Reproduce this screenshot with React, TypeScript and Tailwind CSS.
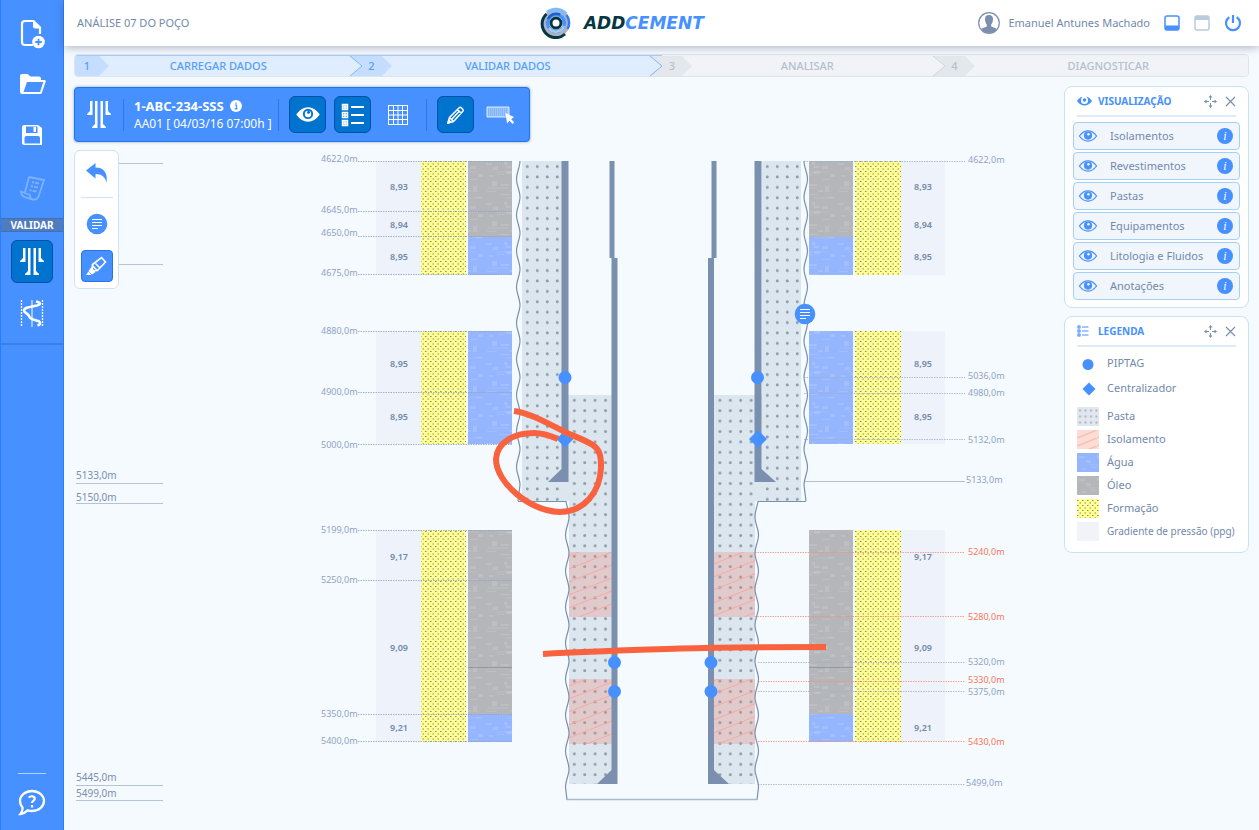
import React, { useState } from "react"
import clsx from "clsx"

type Depth = { y: number; label: string; labelY?: number; x?: number; from?: number; tone?: "red"; solid?: boolean }

const steps = [
  { id: 1, label: "CARREGAR DADOS", done: true, pad: "" },
  { id: 2, label: "VALIDAR DADOS", done: true, pad: "pr-2" },
  { id: 3, label: "ANALISAR", done: false, pad: "pl-2" },
  { id: 4, label: "DIAGNOSTICAR", done: false, pad: "pl-6" },
]

const layers = ["Isolamentos", "Revestimentos", "Pastas", "Equipamentos", "Litologia e Fluidos", "Anotações"]

const fills = [
  { label: "Pasta", fill: "url(#pasta-legend)" },
  { label: "Isolamento", fill: "url(#isolamento-legend)" },
  { label: "Água", fill: "url(#agua)" },
  { label: "Óleo", fill: "url(#oleo)" },
  { label: "Formação", fill: "url(#formacao)" },
  { label: "Gradiente de pressão (ppg)", fill: "#f1f3f9" },
]

const ruler = [
  { label: "4622,0m", textY: 157, lineY: 163 },
  { label: "", textY: 0, lineY: 264 },
  { label: "5133,0m", textY: 479, lineY: 483 },
  { label: "5150,0m", textY: 501, lineY: 503 },
  { label: "5445,0m", textY: 781, lineY: 785 },
  { label: "5499,0m", textY: 797, lineY: 800 },
]

const zones = [
  { top: 161, bottom: 275, oil: [161, 237], water: [237, 275] },
  { top: 331, bottom: 444, oil: null, water: [331, 444] },
  { top: 530, bottom: 742, oil: [530, 714], water: [714, 742] },
]

const gradients = [
  { y: 187, v: "8,93" },
  { y: 225, v: "8,94" },
  { y: 257, v: "8,95" },
  { y: 364, v: "8,95" },
  { y: 417, v: "8,95" },
  { y: 557, v: "9,17" },
  { y: 648, v: "9,09" },
  { y: 728, v: "9,21" },
]

const leftDepths: Depth[] = [
  { y: 161, label: "4622,0m", labelY: 159 },
  { y: 211, label: "4645,0m", labelY: 210 },
  { y: 236, label: "4650,0m", labelY: 233 },
  { y: 274, label: "4675,0m", labelY: 273 },
  { y: 331, label: "4880,0m" },
  { y: 392, label: "4900,0m" },
  { y: 444, label: "5000,0m", labelY: 445 },
  { y: 530, label: "5199,0m" },
  { y: 580, label: "5250,0m" },
  { y: 714, label: "5350,0m" },
  { y: 741, label: "5400,0m" },
]

const rightDepths: Depth[] = [
  { y: 161, label: "4622,0m", labelY: 160, from: 804 },
  { y: 377, label: "5036,0m", labelY: 376, from: 804 },
  { y: 393, label: "4980,0m", from: 804 },
  { y: 439, label: "5132,0m", labelY: 440, from: 804 },
  { y: 481, label: "5133,0m", labelY: 480, from: 804, x: 966, solid: true },
  { y: 552, label: "5240,0m", from: 755, tone: "red" },
  { y: 616, label: "5280,0m", labelY: 617, from: 755, tone: "red" },
  { y: 662, label: "5320,0m", from: 758 },
  { y: 681, label: "5330,0m", labelY: 680, from: 758, tone: "red" },
  { y: 691, label: "5375,0m", labelY: 692, from: 758 },
  { y: 741, label: "5430,0m", labelY: 742, from: 758, tone: "red" },
  { y: 784, label: "5499,0m", labelY: 783, from: 758, x: 966 },
]

// wavy borehole wall, one bulge every 36 units
function wave(x: number, amp: number, top: number, bottom: number) {
  let d = `M${x} ${top}`
  let y = top
  let bulged = false
  while (y + 18 < bottom) {
    const from = bulged ? x - amp : x
    const to = bulged ? x : x - amp
    d += ` C${from} ${y + 6} ${to} ${y + 12} ${to} ${y + 18}`
    y += 18
    bulged = !bulged
  }
  return `${d} L${x - 2} ${bottom}`
}

function EyeIcon({ className, filled }: { className?: string; filled?: boolean }) {
  return (
    <svg className={className} viewBox="0 0 22 14" fill="none">
      <path
        d="M1 7C4 2.8 7.300 1 11 1s7 1.800 10 6c-3 4.200-6.300 6-10 6S4 11.200 1 7Z"
        fill={filled ? "currentColor" : "none"}
        stroke="currentColor"
        strokeWidth="1.500"
      />
      <circle cx="11" cy="6.500" r="4.800" fill={filled ? "#0073cf" : "currentColor"} />
      {filled && <circle cx="11" cy="6.500" r="3" fill="currentColor" />}
      <circle cx="11.500" cy="5" r="1.400" fill={filled ? "#0073cf" : "#fff"} />
    </svg>
  )
}

function SmallEyeIcon() {
  return (
    <svg width="15" height="10" viewBox="0 0 15 10" fill="#4690ff">
      <path d="M0 5C2.200 2 4 1 5.500.800A4 4 0 0 0 4 4.500a3.500 3.500 0 0 0 7 0A4 4 0 0 0 9.500.8C11 1 12.800 2 15 5c-2.500 3.400-5 4.500-7.500 4.500S2.500 8.400 0 5Z" />
      <circle cx="7.500" cy="4" r="1.800" />
    </svg>
  )
}

function WellIcon() {
  return (
    <svg width="24" height="28" viewBox="0 0 24 28" fill="currentColor">
      <path d="M3 0h2.500v14H0v-1l3-3ZM8 0h2.500v27H5v-1l3-3ZM13.500 0H16v23l3 3v1h-5.500ZM18.500 0H21v10l3 3v1h-5.500Z" />
    </svg>
  )
}

function LegendIcon({ size }: { size: "sm" | "lg" }) {
  return (
    <svg className={size === "lg" ? "h-6 w-6" : "h-3 w-3"} viewBox="0 0 24 24" fill="none" stroke="currentColor" strokeWidth="1.500">
      <path d="M1.500 1.500h5v5h-5zM1.500 9.500h5v5h-5zM1.500 17.500h5v5h-5z" />
      <path d="M3 3h2v2H3zM4 10v4M2 12h4M3 19h2v2H3z" />
      <path d="M10 4h13M10 12h13M10 20h13" strokeWidth="2" />
    </svg>
  )
}

function CommentBadge({ cx, cy }: { cx: number; cy: number }) {
  return (
    <g>
      <circle cx={cx} cy={cy} r="10.300" fill="#4690ff" />
      <path
        d={`M${cx - 5} ${cy - 4.5}h10M${cx - 5} ${cy - 1.5}h10M${cx - 5} ${cy + 1.5}h10M${cx - 5} ${cy + 4.5}h6`}
        stroke="#fff"
        strokeWidth="1.200"
      />
    </g>
  )
}

function Sidebar() {
  return (
    <aside className="flex w-16 shrink-0 flex-col items-center border-x border-[#2a7bff] bg-[#4690ff] text-white">
      <nav className="flex w-full flex-col items-center" aria-label="Projeto">
        <button type="button" aria-label="Novo" className="mt-4 flex h-9 w-9 items-center justify-center">
          <svg width="26" height="30" viewBox="0 0 26 30" fill="none">
            <path d="M14 26H6a3 3 0 0 1-3-3V5a3 3 0 0 1 3-3h8.500l6.500 6.500V15" stroke="#fff" strokeWidth="2.200" />
            <path d="M14 1l8 8.500h-6a2 2 0 0 1-2-2Z" fill="#fff" />
            <circle cx="19.500" cy="23" r="6.300" fill="#fff" />
            <path d="M19.500 19.800v6.400M16.300 23h6.400" stroke="#4690ff" strokeWidth="1.800" />
          </svg>
        </button>
        <button type="button" aria-label="Abrir" className="mt-3.5 flex h-9 w-9 items-center justify-center">
          <svg width="27" height="22" viewBox="0 0 27 22">
            <path
              fillRule="evenodd"
              d="M3 1h5.500l3 2.500H20a2 2 0 0 1 2 2V7h3.500c1 0 1.500.800 1.200 1.700L23 19.500c-.300 1-1 1.500-2 1.500H3a2.200 2.200 0 0 1-2-2V3a2 2 0 0 1 2-2Zm5 8L4.500 19H21l3.300-10Z"
              fill="#fff"
            />
          </svg>
        </button>
        <button type="button" aria-label="Salvar" className="mt-[15px] flex h-9 w-9 items-center justify-center">
          <svg width="22" height="22" viewBox="0 0 22 22">
            <path
              fillRule="evenodd"
              d="M3 1h14l4 3v17H3.500A2.500 2.500 0 0 1 1 18.500V3a2 2 0 0 1 2-2Zm2 1.500V9h11.500V2.500ZM5.500 12a2 2 0 0 0-2 2v5.500h15.500V14a2 2 0 0 0-2-2Z"
              fill="#fff"
            />
            <path d="M12.500 3h2.500v5h-2.500z" fill="#fff" />
          </svg>
        </button>
        <button type="button" aria-label="Relatório" disabled className="mt-[17px] flex h-9 w-9 items-center justify-center opacity-30">
          <svg width="27" height="27" viewBox="0 0 27 27" fill="none" stroke="#fff" strokeWidth="1.800">
            <path d="M10 2l15 3-5 15c-1 4-4 5-6.500 4.500C11 24 11 21 11 20L2 16.500c0 4 2 5 4 5.700l7 2.300" />
            <path d="M10 2L6 17.500" />
            <path d="M13 7l7 1.500M12 11l7 1.500M10.500 15l7 1.500" strokeDasharray="2 1.200 6 0" strokeWidth="2" />
          </svg>
        </button>
        <h2 className="mt-3 flex h-3.5 w-full items-center justify-center border-y border-[#456fae] bg-[#4f7cbf] text-[10px] font-bold leading-none">
          VALIDAR
        </h2>
        <button
          type="button"
          aria-label="Poço"
          className="mt-2 flex h-[43px] w-[42px] items-center justify-center rounded-md border border-[#0450a8] bg-[#0073cf]"
        >
          <WellIcon />
        </button>
        <button type="button" aria-label="Perfil" className="mt-3 flex h-9 w-9 items-center justify-center">
          <svg width="24" height="27" viewBox="0 0 24 27" fill="none" stroke="#fff">
            <path d="M1.500 0v27M22.500 0v27" strokeWidth="1.300" strokeDasharray="2 1" />
            <path d="M12 0v27" />
            <path d="M16 1.500c5 1 5 3 1 4C10 7 4 7.500 4 10.500c0 2.500 4 2.500 5 5.500 1 3.500 4 3.500 7.500 4.500 4.500 1 4.500 4 1 5" strokeWidth="2.600" />
          </svg>
        </button>
        <span className="mt-3 h-0.5 w-full bg-[#3b80e6]" />
      </nav>
      <span className="mb-3 mt-auto h-px w-7 bg-white/60" />
      <button type="button" aria-label="Ajuda" className="mb-3 flex h-8 w-8 items-center justify-center">
        <svg width="28" height="27" viewBox="0 0 28 27" fill="none">
          <path
            d="M14 2c6.600 0 12 4.400 12 10s-5.400 10-12 10c-1.500 0-3-.200-4.300-.6C7.500 23.500 5 24.800 2.500 25c1.500-1.800 2.300-4 2-6.500C2.800 16.700 2 14.400 2 12 2 6.400 7.400 2 14 2Z"
            stroke="#fff"
            strokeWidth="2.300"
          />
          <path d="M10.800 8.600c1.500-2 6.200-1.800 5.900 1.200-.200 2-2.700 2-2.700 4.300M14 16v2.400" stroke="#fff" strokeWidth="2.200" />
        </svg>
      </button>
    </aside>
  )
}

function Logo() {
  return (
    <div className="flex items-center gap-3">
      <svg width="32" height="32" viewBox="0 0 32 32" fill="none" className="shrink-0">
        <circle cx="16" cy="16" r="12" stroke="#aeb4bf" strokeWidth="4" />
        <path d="M6.500 7A13.500 13.500 0 0 0 25 27" stroke="#053642" strokeWidth="3" />
        <path d="M7 5.500A13.800 13.800 0 0 1 26 7" stroke="#7dbcff" strokeWidth="3.500" />
        <path d="M26.500 8A13.500 13.500 0 0 1 27.500 22" stroke="#2e7ff0" strokeWidth="2.500" />
        <circle cx="16" cy="16" r="8.500" stroke="#4690ff" strokeWidth="3.500" />
        <path d="M8 12a9 9 0 0 1 12-4.500" stroke="#1c5fd0" strokeWidth="2.500" />
        <path d="M9 21a8.500 8.500 0 0 0 15-2" stroke="#a9c8ee" strokeWidth="2.500" />
        <circle cx="16" cy="16" r="5" stroke="#053642" strokeWidth="3" fill="#fff" />
      </svg>
      <span className="font-['DejaVu_Sans',sans-serif] text-[17px] font-bold italic leading-none text-[#4690ff]">
        <span className="text-[#053642]">ADD</span>CEMENT
      </span>
    </div>
  )
}

function Header() {
  return (
    <header className="z-20 grid h-[46px] shrink-0 grid-cols-[474fr_auto_553fr] items-center bg-white shadow-[0_2px_8px_rgba(60,70,100,0.35)]">
      <h1 className="pl-[13px] text-[11px]">ANÁLISE 07 DO POÇO</h1>
      <Logo />
      <div className="flex items-center justify-end gap-3.5 pr-[17px]">
        <div className="flex items-center gap-2 text-[11px]">
          <svg width="22" height="22" viewBox="0 0 22 22">
            <circle cx="11" cy="11" r="10.300" fill="#fff" stroke="#7a8fae" strokeWidth="1.200" />
            <path
              d="M11 3c3 0 4.200 1.800 4 4.500-.200 2.300-.800 4-1.800 5v2c1.500.800 3.800 1 5.300 2.500A9.500 9.500 0 0 1 11 21a9.500 9.500 0 0 1-7.500-4C5 15.500 7.300 15.300 8.800 14.500v-2c-1-1-1.600-2.700-1.800-5C6.800 4.800 8 3 11 3Z"
              fill="#7a8fae"
            />
          </svg>
          Emanuel Antunes Machado
        </div>
        <button type="button" aria-label="Minimizar">
          <svg width="16" height="16" viewBox="0 0 16 16">
            <rect x="1" y="1" width="14" height="14" rx="2" fill="none" stroke="#4690ff" strokeWidth="1.500" />
            <path d="M1 10.500h14v3a1.500 1.500 0 0 1-1.500 1.500h-11A1.500 1.500 0 0 1 1 13.500Z" fill="#4690ff" />
          </svg>
        </button>
        <button type="button" aria-label="Janela">
          <svg width="16" height="16" viewBox="0 0 16 16">
            <rect x="1" y="1" width="14" height="14" rx="2" fill="none" stroke="#b9cbdd" strokeWidth="1.500" />
            <path d="M1 5V2.500A1.500 1.500 0 0 1 2.500 1h11A1.500 1.500 0 0 1 15 2.500V5Z" fill="#b9cbdd" />
          </svg>
        </button>
        <button type="button" aria-label="Sair">
          <svg width="18" height="18" viewBox="0 0 18 18" fill="none" stroke="#4690ff" strokeWidth="2.200">
            <path d="M9 1v8M5.300 3.200a7 7 0 1 0 7.400 0" />
          </svg>
        </button>
      </div>
    </header>
  )
}

function Steps() {
  return (
    <ol className="grid h-[23px] grid-cols-[287fr_301fr_283fr_304fr] overflow-hidden rounded border border-[#dfe3ea] text-[11px] font-medium">
      {steps.map((step, i) => {
        const last = i === steps.length - 1
        const nextDone = !last && steps[i + 1].done
        return (
          <li
            key={step.id}
            className={clsx("grid border-y", step.done ? "border-[#a4cffc] bg-[#e0edff] text-[#55a0f6]" : "border-transparent bg-[#f1f3f7] text-[#b4c0d0]")}
          >
            <span className={clsx("flex items-center justify-center [grid-area:1/1]", step.pad)}>{step.label}</span>
            <span className="flex items-stretch justify-between [grid-area:1/1]">
              <span className="flex">
                <span className={clsx("flex items-center justify-center", i === 0 ? "w-6" : "w-5", step.done ? "bg-[#c5deff]" : "bg-[#e4e8ed]")}>
                  {step.id}
                </span>
                <svg className="h-full w-2.5" viewBox="0 0 10 20" preserveAspectRatio="none" fill={step.done ? "#c5deff" : "#e4e8ed"}>
                  <path d="M0 0L10 10L0 20Z" />
                </svg>
              </span>
              {!last && (
                <svg className="h-full w-3" viewBox="0 0 12 20" preserveAspectRatio="none">
                  <path d="M0 0H12V20H0Z" fill={nextDone ? "#c5deff" : "#e4e8ed"} />
                  <path d="M0 0L12 10L0 20" fill={step.done ? "#e0edff" : "#f1f3f7"} stroke={step.done ? "#7cb7f8" : "#cfd6df"} />
                </svg>
              )}
            </span>
          </li>
        )
      })}
    </ol>
  )
}

function Toolbar() {
  const active = "flex h-[37px] w-[37px] items-center justify-center rounded-md border border-[#0450a8] bg-[#0073cf]"
  return (
    <div className="flex h-[55px] w-[456px] items-center rounded border border-[#1c74f7] bg-[#4690ff] text-white shadow-[0_0_3px_rgba(90,100,120,0.6)]">
      <span className="ml-3">
        <WellIcon />
      </span>
      <span className="ml-3 h-8 w-px bg-[#2a78f0]" />
      <div className="ml-2.5 w-36 text-[12px] leading-[17px]">
        <div className="flex items-center gap-1.5 text-[13px] font-bold leading-[17px]">
          1-ABC-234-SSS
          <svg width="12" height="12" viewBox="0 0 12 12">
            <circle cx="6" cy="6" r="6" fill="#fff" />
            <path d="M4.800 5h1.700v3.500M4.600 8.800h3M6 2.400v1.300" stroke="#4690ff" strokeWidth="1.200" fill="none" />
          </svg>
        </div>
        <div className="whitespace-nowrap">AA01 [ 04/03/16 07:00h ]</div>
      </div>
      <span className="h-8 w-px bg-[#2a78f0]" />
      <button type="button" aria-label="Visualização" className={clsx(active, "ml-2.5")}>
        <EyeIcon className="h-[15px] w-6" filled />
      </button>
      <button type="button" aria-label="Legenda" className={clsx(active, "ml-2")}>
        <LegendIcon size="lg" />
      </button>
      <button type="button" aria-label="Grade" className="ml-2 flex h-[37px] w-[37px] items-center justify-center">
        <svg width="20" height="20" viewBox="0 0 20 20" fill="none" stroke="#fff">
          <path d="M0 .5h20M0 5.500h20M0 10h20M0 14.500h20M0 19.500h20M.5 0v20M5.500 0v20M10 0v20M14.500 0v20M19.500 0v20" />
        </svg>
      </button>
      <span className="ml-2.5 h-8 w-px bg-[#2a78f0]" />
      <button type="button" aria-label="Editar" className={clsx(active, "ml-2.5")}>
        <svg width="18" height="18" viewBox="0 0 18 18" fill="none" stroke="#fff" strokeWidth="1.500">
          <path d="M1 17l1.500-5.500L12.500 1.500c1-1 4.500 2.500 3.500 3.500L6.500 15.500ZM10.500 3.500l4 4M2.500 11.500l4 4M12 5.500l-7 7.500" />
          <path d="M1 17l.8-2.800 2 2Z" fill="#fff" />
        </svg>
      </button>
      <button type="button" aria-label="Selecionar" className="ml-3 flex h-[37px] w-[30px] items-center justify-center">
        <svg width="30" height="20" viewBox="0 0 30 20">
          <path d="M1 2h22v10H1z" fill="#9cc4fd" stroke="#dceaff" />
          <path d="M2 4h20M2 6h20M2 8h20M2 10h20" stroke="#6ba6fb" strokeDasharray="1 1" />
          <path d="M19.500 8l1.500 10.500 2.500-2.700 3 3.200 1.700-1.700-3-3L28 12Z" fill="#fff" />
        </svg>
      </button>
    </div>
  )
}

function AnnotationTools() {
  return (
    <div className="flex h-[139px] w-[45px] flex-col items-center rounded-md border border-[#cde3ef] bg-white">
      <button type="button" aria-label="Desfazer" className="mt-2.5 flex h-6 w-8 items-center justify-center">
        <svg width="22" height="20" viewBox="0 0 22 20" fill="#4690ff">
          <path d="M0 7.500L9.500 0v4.500C17 4.500 22 9 20.500 19.500 19 14 16 11 9.500 11v4.500Z" />
        </svg>
      </button>
      <span className="mt-3 h-px w-8 bg-[#cfe3f8]" />
      <button type="button" aria-label="Comentar" className="mt-3.5 flex h-6 w-6 items-center justify-center">
        <svg width="22" height="22" viewBox="0 0 22 22">
          <CommentBadge cx={11} cy={11} />
        </svg>
      </button>
      <button type="button" aria-label="Marcador" className="mt-3.5 flex h-8 w-8 items-center justify-center rounded border border-[#2474ee] bg-[#4690ff]">
        <svg width="21" height="20" viewBox="0 0 21 20" fill="none" stroke="#fff" strokeWidth="1.600">
          <path d="M15.500 1.500l4 4.500-8 8.500-4 .5L6 12.500l.5-4ZM6 9l5 5.500M9.500 7.500l4 4" />
          <path d="M5 11.500L2.500 15l3.500 3.500L9.500 16ZM2.500 15.500L0 19h5.500Z" fill="#fff" stroke="none" />
        </svg>
      </button>
    </div>
  )
}

function Panel({ title, icon, children }: { title: string; icon: React.ReactNode; children: React.ReactNode }) {
  return (
    <section className="rounded-lg border border-[#c9e3f0] bg-white px-2 pb-[7px]">
      <div className="mx-1 flex h-[30px] items-center border-b-2 border-[#dcebf7] text-[#7a8fae]">
        <span className="flex w-[21px] text-[#4690ff]">{icon}</span>
        <h2 className="flex-1 text-[10px] font-bold text-[#4690ff]">{title}</h2>
        <button type="button" aria-label={`Mover ${title}`}>
          <svg width="13" height="13" viewBox="0 0 13 13" fill="#7a8fae">
            <path d="M6.500 0l2 2.500h-4ZM6.500 13l2-2.500h-4ZM0 6.500l2.500-2v4ZM13 6.500l-2.500-2v4ZM6 2.500h1V5H6ZM6 8h1v2.500H6ZM2.500 6H5v1H2.500ZM8 6h2.500v1H8Z" />
          </svg>
        </button>
        <button type="button" aria-label={`Fechar ${title}`} className="ml-2">
          <svg width="11" height="11" viewBox="0 0 11 11" stroke="#7a8fae" strokeWidth="1.200">
            <path d="M1 1l9 9M10 1l-9 9" />
          </svg>
        </button>
      </div>
      {children}
    </section>
  )
}

function VisualizationPanel() {
  const [hidden, setHidden] = useState<string[]>([])
  const toggle = (layer: string) =>
    setHidden(hidden.includes(layer) ? hidden.filter((l) => l !== layer) : [...hidden, layer])

  return (
    <Panel title="VISUALIZAÇÃO" icon={<SmallEyeIcon />}>
      <ul className="mt-[5px] flex flex-col gap-0.5">
        {layers.map((layer) => (
          <li key={layer} className="flex h-7 items-center rounded-sm border border-[#a3d0f8] bg-[#f1f6fd] pr-1.5">
            <button
              type="button"
              aria-pressed={!hidden.includes(layer)}
              onClick={() => toggle(layer)}
              className="flex flex-1 items-center gap-3 whitespace-nowrap pl-1 text-left text-[11px]"
            >
              <EyeIcon className={clsx("h-3 w-5 text-[#4690ff]", hidden.includes(layer) && "opacity-30")} />
              {layer}
            </button>
            <button
              type="button"
              aria-label={`Sobre ${layer}`}
              className="flex h-4 w-4 items-center justify-center rounded-full bg-[#4690ff] font-['Liberation_Serif',serif] text-[12px] italic leading-none text-white"
            >
              i
            </button>
          </li>
        ))}
      </ul>
    </Panel>
  )
}

function LegendPanel() {
  return (
    <Panel title="LEGENDA" icon={<LegendIcon size="sm" />}>
      <ul className="mx-1 mt-1 pb-0.5 text-[11px]">
        <li className="flex h-[25px] items-center gap-2">
          <svg width="22" height="12" viewBox="0 0 22 12">
            <circle cx="11" cy="6.500" r="5.500" fill="#4690ff" />
          </svg>
          PIPTAG
        </li>
        <li className="mb-1 flex h-[25px] items-center gap-2">
          <svg width="22" height="14" viewBox="0 0 22 14">
            <path d="M12 .5L18.500 7 12 13.500 5.500 7Z" fill="#4690ff" />
          </svg>
          Centralizador
        </li>
        {fills.map((item, i) => (
          <li key={item.label} className={clsx("flex h-[23px] items-center gap-2 whitespace-nowrap", i === fills.length - 1 && "text-[10px]")}>
            <svg width="22" height="19" viewBox="0 0 22 19" className="shrink-0">
              <rect width="22" height="19" fill={item.fill} />
            </svg>
            {item.label}
          </li>
        ))}
      </ul>
    </Panel>
  )
}

function DepthRuler() {
  return (
    <svg width="90" height="660" viewBox="74 150 90 660" className="mt-16 justify-self-start [grid-area:1/1]" fontSize="10" fill="#7a8fae">
      {ruler.map((mark) => (
        <g key={mark.lineY}>
          {mark.label && (
            <text x="76" y={mark.textY}>
              {mark.label}
            </text>
          )}
          <path d={`M76 ${mark.lineY + 0.5}H163`} stroke="#b3c4d8" />
        </g>
      ))}
    </svg>
  )
}

function Patterns() {
  return (
    <defs>
      <pattern id="pasta-outer" x="522" y="161" width="10" height="10.400" patternUnits="userSpaceOnUse">
        <circle cx="5.300" cy="5.500" r="1.500" fill="#8f9ca8" />
      </pattern>
      <pattern id="pasta-inner" x="569" y="395" width="10.400" height="10.400" patternUnits="userSpaceOnUse">
        <circle cx="5.300" cy="5.300" r="1.500" fill="#8f9ca8" />
      </pattern>
      <pattern id="pasta-legend" width="5.500" height="6" patternUnits="userSpaceOnUse">
        <path d="M0 0h5.500v6H0z" fill="#e2e6ee" />
        <path d="M2 2.500h2v2H2z" fill="#a9b4c4" />
      </pattern>
      <pattern id="isolamento" width="33" height="13" patternUnits="userSpaceOnUse">
        <path d="M0 13L33 0" stroke="#f4a9a3" />
      </pattern>
      <pattern id="isolamento-legend" width="20" height="8" patternUnits="userSpaceOnUse">
        <path d="M0 0h20v8H0z" fill="#fddcd6" />
        <path d="M0 8L20 0" stroke="#fabdb2" strokeWidth="1.400" />
      </pattern>
      <pattern id="smudges" width="44" height="40" patternUnits="userSpaceOnUse">
        <path
          d="M2 3h6v2H2zM9 7h5v3H9zM20 2h3v4h4v2h-5v-3h-2zM30 6h6v3h-6zM24 11h4v3h-6v-2zM5 15h4v2H5zM14 14h6v1h-6zM8 21h5v5H8zM30 19h8v1h-8zM17 24h8v2h-8zM33 26h4v6h-4zM3 31h9v1H3zM16 34h10v1H16zM26 30h5v2h-5zM38 14h5v3h-5zM36 37h7v1h-7z"
          fill="#fff"
          fillOpacity="0.130"
        />
        <path d="M12 12h26M4 28h20M22 38h20" stroke="#fff" strokeOpacity="0.100" />
      </pattern>
      <pattern id="agua" width="44" height="40" patternUnits="userSpaceOnUse">
        <path d="M0 0h44v40H0z" fill="#95b6ff" />
        <path d="M0 0h44v40H0z" fill="url(#smudges)" />
      </pattern>
      <pattern id="oleo" width="44" height="40" patternUnits="userSpaceOnUse">
        <path d="M0 0h44v40H0z" fill="#b4b6b9" />
        <path d="M0 0h44v40H0z" fill="url(#smudges)" />
      </pattern>
      <pattern id="formacao" width="5" height="5" patternUnits="userSpaceOnUse">
        <path d="M0 0h5v5H0z" fill="#ffff94" />
        <path d="M0 1h1.500v1H0zM2.500 3.500H4v1H2.500z" fill="#8c8c63" />
      </pattern>
    </defs>
  )
}

function ZoneColumns() {
  return (
    <g>
      {zones.map((z) => (
        <g key={z.top}>
          <path d={`M376 ${z.top}H421V${z.bottom}H376ZM901 ${z.top}H945V${z.bottom}H901Z`} fill="#eef2fa" />
          <path d={`M421 ${z.top}H466V${z.bottom}H421ZM855 ${z.top}H901V${z.bottom}H855Z`} fill="url(#formacao)" />
          {z.oil && <path d={`M468 ${z.oil[0]}H512V${z.oil[1]}H468ZM809 ${z.oil[0]}H853V${z.oil[1]}H809Z`} fill="url(#oleo)" />}
          <path d={`M468 ${z.water[0]}H512V${z.water[1]}H468ZM809 ${z.water[0]}H853V${z.water[1]}H809Z`} fill="url(#agua)" />
        </g>
      ))}
      <path d="M468 667.500H512M809 667.500H853" stroke="#95979a" />
      {gradients.map((g) => (
        <g key={g.y} textAnchor="middle" fontWeight="600" fill="#7289a9">
          <text x="399" y={g.y + 3}>{g.v}</text>
          <text x="923" y={g.y + 3}>{g.v}</text>
        </g>
      ))}
    </g>
  )
}

function Completion() {
  return (
    <g>
      {/* cement */}
      <path d="M522 161H562V395H612V784H569V501H522ZM801 161H762V395H714V784H755V501H801Z" fill="#dce6ee" />
      <path d="M522 161H562V501H522ZM762 161H801V501H762Z" fill="url(#pasta-outer)" />
      <path d="M569 395H612V784H569ZM714 395H755V784H714Z" fill="url(#pasta-inner)" />
      {[552, 679].map((y) => (
        <g key={y}>
          <path d={`M569 ${y}H612V${y + 65}H569ZM714 ${y}H755V${y + 65}H714Z`} fill="#f08074" fillOpacity="0.280" />
          <path d={`M569 ${y}H612V${y + 65}H569ZM714 ${y}H755V${y + 65}H714Z`} fill="url(#isolamento)" />
        </g>
      ))}

      {/* borehole wall, drawn once and mirrored */}
      {["", "translate(1324 0) scale(-1 1)"].map((transform) => (
        <g key={transform} transform={transform} stroke="#7a90ae" strokeWidth="1.200" fill="none">
          <path d={wave(520, 3.5, 161, 501)} />
          <path d="M518 501.500H566C567 508 569 510 569 517" />
          <path d={wave(569, 3.5, 517, 800)} />
        </g>
      ))}
      <path d="M567 799.500H757" stroke="#a9bccf" strokeWidth="1.500" />

      {/* casing and shoes */}
      <path
        d="M561.500 161H568.500V482H548L561.500 469ZM761.500 161H754.500V482H776L761.500 469ZM609.500 161H614.500V258H617.500V784H597L611.500 770V258H609.500ZM716.500 161H711.500V258H708V784H729L714 770V258H716.500Z"
        fill="#7a90ae"
      />
      <g fill="#4690ff">
        <circle cx="565" cy="377.500" r="6.500" />
        <circle cx="757.500" cy="377.500" r="6.500" />
        <circle cx="614.500" cy="662.500" r="6.500" />
        <circle cx="614.500" cy="691.500" r="6.500" />
        <circle cx="711" cy="662.500" r="6.500" />
        <circle cx="711" cy="691.500" r="6.500" />
        <path d="M565 430.500l8.500 8.500-8.500 8.500-8.500-8.500ZM758 430l9 9-9 9-9-9Z" />
      </g>
    </g>
  )
}

function DepthLines() {
  return (
    <g>
      {leftDepths.map((d) => (
        <g key={d.y}>
          <text x="321" y={(d.labelY ?? d.y) + 3} fill="#8fa3bf">
            {d.label}
          </text>
          <path d={`M358 ${d.y + 0.5}H513`} stroke="#8ea2be" strokeOpacity="0.8" strokeDasharray="1.500 1" />
        </g>
      ))}
      {rightDepths.map((d) => (
        <g key={d.y}>
          <path
            d={`M${d.from} ${d.y + 0.5}H965`}
            stroke={d.tone === "red" ? "#fb8d78" : "#9fb0c8"}
            strokeOpacity="0.8"
            strokeDasharray={d.solid ? "none" : "1.500 1"}
          />
          <text x={d.x ?? 968} y={(d.labelY ?? d.y) + 3} fill={d.tone === "red" ? "#f9775b" : "#8fa3bf"}>
            {d.label}
          </text>
        </g>
      ))}
    </g>
  )
}

function WellDiagram() {
  return (
    <svg width="693" height="660" viewBox="315 150 693 660" className="mt-16 justify-self-center [grid-area:1/1]" fontSize="9">
      <Patterns />
      <ZoneColumns />
      <DepthLines />
      <Completion />
      <CommentBadge cx={805} cy={314} />
      <g fill="none" stroke="#f9623e" strokeWidth="6">
        <path d="M514 411C530 413 547 423 565 432C576 437 585 440 593 445C601 451 601 458 601 468C600 492 584 512 560 512C530 511 496 483 496 459C497 443 513 433 534 433C544 433 551 436 558 439" />
        <path d="M543 654C600 651 640 650 680 648.500S770 647 826 647" />
      </g>
    </svg>
  )
}

export default function App() {
  return (
    <div className="flex min-h-screen bg-[#f5faff] font-['Noto_Sans',sans-serif] text-[#7289ab]">
      <Sidebar />
      <div className="flex min-w-0 flex-1 flex-col">
        <Header />
        <main className="flex flex-1 flex-col px-2.5 pt-2">
          <Steps />
          <div className="mt-[9px] grid flex-1 items-start">
            <DepthRuler />
            <WellDiagram />
            <div className="z-10 mt-px flex flex-col items-start gap-2 justify-self-start [grid-area:1/1]">
              <Toolbar />
              <AnnotationTools />
            </div>
            <div className="z-10 flex w-[185px] flex-col gap-2 justify-self-end [grid-area:1/1]">
              <VisualizationPanel />
              <LegendPanel />
            </div>
          </div>
        </main>
      </div>
    </div>
  )
}
